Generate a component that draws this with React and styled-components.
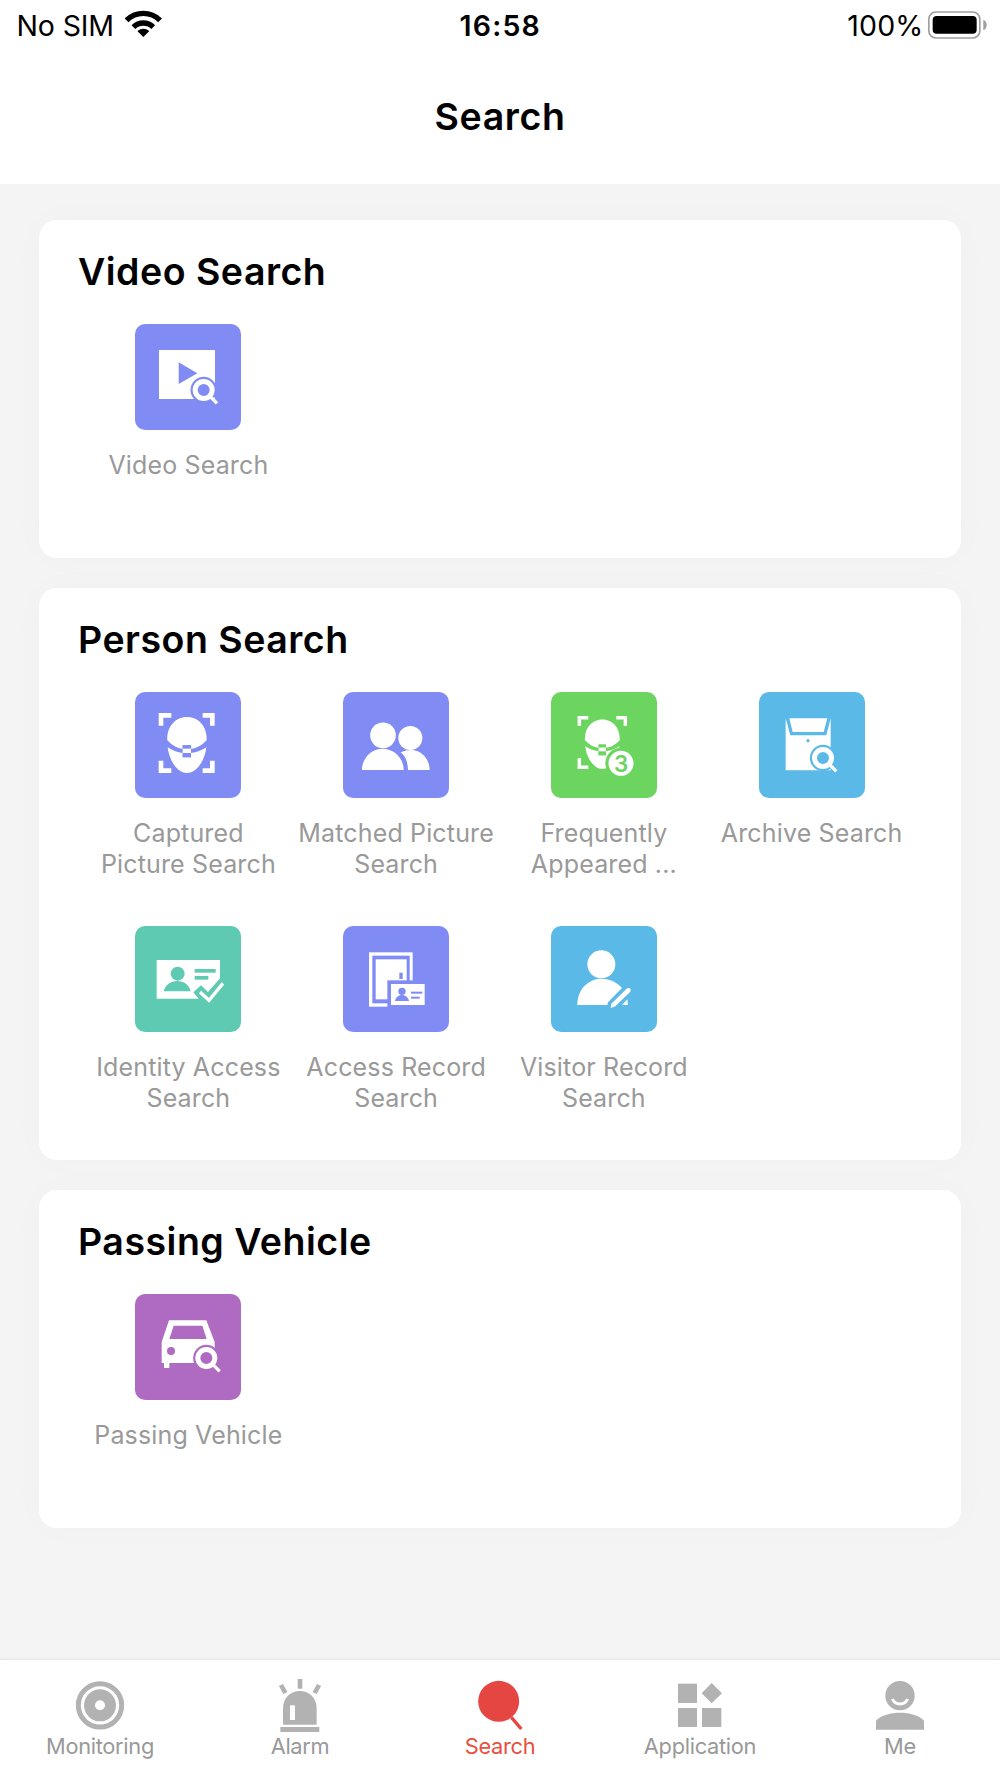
import React from "react";
import styled, { createGlobalStyle } from "styled-components";

const COLORS = {
  indigo: "#808bf4",
  green: "#6bd560",
  blue: "#5bb9e7",
  teal: "#5ecab2",
  purple: "#af6ac1",
};

const Magnifier = ({ cx, cy, bg }) => (
  <>
    <circle cx={cx} cy={cy} r="39.5" fill={bg} />
    <circle cx={cx} cy={cy} r="25.5" fill={bg} stroke="#fff" strokeWidth="15" />
    <path
      d={`M${cx + 20} ${cy + 20}L${cx + 40} ${cy + 40}`}
      stroke="#fff"
      strokeWidth="10"
    />
  </>
);

const Face = () => (
  <>
    <path d="M97 145C95 105 120 75 156 75C192 75 217 105 215 145Q193 168 169 171L168 160H143V171Q118 168 97 145Z" />
    <path d="M98 166Q118 180 143 183V196H168V183Q194 180 214 166C210 205 185 243 156 243C127 243 102 205 98 166Z" />
    <path d="M143 160H168V170H143ZM143 183H168V196H143Z" fill="var(--tile)" />
    <rect x="143" y="170" width="25" height="13" />
  </>
);

const VideoIcon = ({ bg }) => (
  <>
    <rect x="72" y="78" width="168" height="147" />
    <path d="M131 115L187 148L131 180Z" fill={bg} />
    <Magnifier cx={206} cy={198} bg={bg} />
  </>
);

const CapturedIcon = () => (
  <>
    <path
      d="M78 101V70H109M203 70H232V101M232 206V236H203M109 236H78V206"
      fill="none"
      stroke="#fff"
      strokeWidth="14"
    />
    <Face />
  </>
);

const MatchedIcon = () => (
  <>
    <circle cx="120" cy="130" r="38.5" />
    <path d="M57 234C57 195 88 170 119 170C153 170 182 198 182 234Z" />
    <circle cx="202" cy="138" r="36" />
    <path d="M173 181Q188 174 204 174C236 174 260 202 260 234H195C194 210 188 192 173 181Z" />
  </>
);

const FrequentIcon = ({ bg }) => (
  <>
    <path
      d="M85 102V77H112M196 77H223V102M112 226H85V199"
      fill="none"
      stroke="#fff"
      strokeWidth="10.5"
    />
    <g transform="translate(16.4 16.4) scale(0.883)">
      <Face />
    </g>
    <circle cx="210" cy="214" r="47" fill={bg} />
    <circle cx="210" cy="214" r="37.5" />
    <BadgeText x="210" y="239" fill={bg}>
      3
    </BadgeText>
  </>
);

const ArchiveIcon = ({ bg }) => (
  <>
    <path d="M80 79L94 130H202L215 79V235H80Z" />
    <path d="M91 79H205L194 120H101Z" />
    <circle cx="147" cy="146" r="5" fill={bg} />
    <Magnifier cx={192} cy={198} bg={bg} />
  </>
);

const IdentityIcon = ({ bg }) => (
  <>
    <path d="M65 102H255V157L219 198L198 178L175 199L191 218H65Z" />
    <g fill={bg}>
      <circle cx="128" cy="143" r="21" />
      <path d="M86 196C90 176 108 165 127 165C146 165 163 176 167 196Z" />
      <rect x="179" y="129" width="63" height="11" />
      <rect x="179" y="150" width="41" height="11" />
    </g>
    <path
      d="M195 198L222 223L264 172"
      fill="none"
      stroke="#fff"
      strokeWidth="10"
    />
  </>
);

const AccessIcon = ({ bg }) => (
  <>
    <rect x="78" y="79" width="131" height="163" />
    <rect x="88" y="89" width="112" height="143" fill={bg} />
    <rect x="98" y="100" width="93" height="120" />
    <rect x="169" y="140" width="10" height="19" fill={bg} />
    <rect x="133" y="163" width="112" height="82" fill={bg} />
    <rect x="144" y="174" width="101" height="63" />
    <g fill={bg}>
      <circle cx="177" cy="196" r="11" />
      <path d="M156 225C158 214 167 207 177 207C187 207 196 214 198 225Z" />
      <rect x="204" y="197" width="34" height="6" />
      <rect x="204" y="212" width="26" height="6" />
    </g>
  </>
);

const VisitorIcon = () => (
  <>
    <circle cx="151" cy="115" r="42" />
    <path d="M79 237C79 190 112 158 151 158C178 158 198 169 213 186L171 229L169 237Z" />
    <path d="M229 220L231 237H213Z" />
    <path d="M179 246L181 233L226 189Q231 184 237 187Q241 191 238 197L193 241Z" />
  </>
);

const CarIcon = ({ bg }) => (
  <>
    <path d="M102 79H214L239 144V207H103V222H87V207H80V144Z" />
    <path d="M116 95H202L215 135H103Z" fill={bg} />
    <circle cx="108" cy="171" r="12" fill={bg} />
    <Magnifier cx={214} cy={192} bg={bg} />
  </>
);

const sections = [
  {
    title: "Video Search",
    items: [{ label: "Video Search", color: COLORS.indigo, icon: VideoIcon }],
  },
  {
    title: "Person Search",
    items: [
      {
        label: "Captured Picture Search",
        color: COLORS.indigo,
        icon: CapturedIcon,
      },
      {
        label: "Matched Picture Search",
        color: COLORS.indigo,
        icon: MatchedIcon,
      },
      {
        label: "Frequently Appeared ...",
        color: COLORS.green,
        icon: FrequentIcon,
      },
      { label: "Archive Search", color: COLORS.blue, icon: ArchiveIcon },
      {
        label: "Identity Access Search",
        color: COLORS.teal,
        icon: IdentityIcon,
      },
      {
        label: "Access Record Search",
        color: COLORS.indigo,
        icon: AccessIcon,
      },
      {
        label: "Visitor Record Search",
        color: COLORS.blue,
        icon: VisitorIcon,
      },
    ],
  },
  {
    title: "Passing Vehicle",
    items: [{ label: "Passing Vehicle", color: COLORS.purple, icon: CarIcon }],
  },
];

const tabs = [
  {
    label: "Monitoring",
    icon: (
      <>
        <circle
          cx="90"
          cy="88"
          r="65"
          fill="none"
          stroke="currentColor"
          strokeWidth="15"
        />
        <circle cx="90" cy="88" r="48" />
        <circle cx="90" cy="88" r="15" fill="#fff" />
      </>
    ),
  },
  {
    label: "Alarm",
    icon: (
      <>
        <path d="M39 146V96C39 66 61 45 89.5 45C118 45 140 66 140 96V146Z" />
        <rect x="60" y="88" width="15" height="44" fill="#fff" />
        <rect x="31" y="153" width="117" height="15" />
        <path
          d="M90 9V38M33 27L46 51M147 27L134 51"
          stroke="currentColor"
          strokeWidth="14"
        />
      </>
    ),
  },
  {
    label: "Search",
    active: true,
    icon: (
      <>
        <circle cx="86" cy="76" r="61.5" />
        <path d="M124 124L154 159" stroke="currentColor" strokeWidth="10" />
      </>
    ),
  },
  {
    label: "Application",
    icon: (
      <>
        <rect x="24" y="23" width="57" height="58" />
        <rect x="24" y="96" width="57" height="57" />
        <rect x="96" y="96" width="58" height="57" />
        <path d="M125 21L156 52L125 82L95 52Z" />
      </>
    ),
  },
  {
    label: "Me",
    icon: (
      <>
        <circle cx="90" cy="59" r="44" />
        <path
          d="M67 69C76 89 104 89 113 69"
          fill="none"
          stroke="#fff"
          strokeWidth="9"
        />
        <path d="M18 161V134C34 117 62 110 90 110C118 110 146 117 162 134V161Z" />
      </>
    ),
  },
];

const App = () => (
  <>
    <GlobalStyle />
    <Screen>
      <Header>
        <StatusBar>
          <Carrier>
            No SIM
            <svg width="36.7" height="27" viewBox="0 0 110 81">
              <path d="M55 81L37 63Q55 49 73 63Z" />
              <path
                d="M25.3 51.3A42 42 0 0 1 84.7 51.3M4.8 30.8A71 71 0 0 1 105.2 30.8"
                fill="none"
                stroke="#000"
                strokeWidth="16"
              />
            </svg>
          </Carrier>
          <Clock>16:58</Clock>
          <Battery>
            100%
            <svg width="59" height="28" viewBox="0 0 177 84">
              <rect
                x="2.5"
                y="3"
                width="153"
                height="78"
                rx="21"
                fill="none"
                stroke="#9f9f9f"
                strokeWidth="5"
              />
              <rect x="14" y="15" width="132" height="53" rx="12" />
              <path d="M166 26Q176 30 176 42Q176 54 166 58Z" fill="#9f9f9f" />
            </svg>
          </Battery>
        </StatusBar>
        <PageTitle>Search</PageTitle>
      </Header>

      <Content>
        {sections.map((section) => (
          <Card key={section.title}>
            <CardTitle>{section.title}</CardTitle>
            <Grid>
              {section.items.map(({ label, color, icon: Icon }) => (
                <Item key={label}>
                  <Tile $color={color} viewBox="0 0 318 318">
                    <Icon bg={color} />
                  </Tile>
                  <Label>{label}</Label>
                </Item>
              ))}
            </Grid>
          </Card>
        ))}
      </Content>

      <TabBar>
        {tabs.map((tab) => (
          <Tab key={tab.label} $active={tab.active}>
            <svg
              width="60"
              height="56"
              viewBox="0 0 180 168"
              fill="currentColor"
            >
              {tab.icon}
            </svg>
            <TabLabel $active={tab.active}>{tab.label}</TabLabel>
          </Tab>
        ))}
      </TabBar>
    </Screen>
  </>
);

export default App;

const GlobalStyle = createGlobalStyle`
  body {
    margin: 0;
  }
  * {
    box-sizing: border-box;
  }
`;

const Screen = styled.div`
  width: 1000px;
  height: 1778px;
  display: flex;
  flex-direction: column;
  overflow: hidden;
  background: #f4f4f4;
  color: #000;
  font-family: Inter, "Liberation Sans", sans-serif;
`;

const Header = styled.header`
  height: 184px;
  flex-shrink: 0;
  background: #fff;
`;

const StatusBar = styled.div`
  display: grid;
  grid-template-columns: 1fr auto 1fr;
  padding: 0 13px 0 16.5px;
  font-size: 28.5px;
  line-height: 51px;
`;

const Carrier = styled.div`
  display: flex;
  align-items: center;
  gap: 11px;
  letter-spacing: -0.15px;

  svg {
    margin-bottom: 4px;
  }
`;

const Clock = styled.div`
  margin-right: 3px;
  font-weight: 600;
  letter-spacing: 1.2px;
`;

const Battery = styled.div`
  display: flex;
  justify-content: flex-end;
  align-items: center;
  gap: 4.5px;
  letter-spacing: 0.2px;

  svg {
    margin-bottom: 2px;
  }
`;

const PageTitle = styled.h1`
  margin: 0;
  font-size: 37.5px;
  font-weight: 560;
  line-height: 131px;
  text-align: center;
  letter-spacing: 0.6px;
`;

const Content = styled.main`
  flex: 1;
  display: flex;
  flex-direction: column;
  gap: 30px;
  padding: 36px 39px 0;
`;

const Card = styled.section`
  padding: 0 45.5px;
  border-radius: 18px;
  background: #fff;
  box-shadow: 0 0 40px rgba(0, 0, 0, 0.018);
`;

const CardTitle = styled.h2`
  height: 104px;
  margin: 0 0 0 -6.5px;
  font-size: 37.5px;
  font-weight: 560;
  line-height: 103px;
  letter-spacing: 0.5px;
`;

const Grid = styled.div`
  display: grid;
  grid-template-columns: repeat(4, 1fr);
  grid-auto-rows: 234px;
`;

const Item = styled.div`
  display: flex;
  flex-direction: column;
  align-items: center;
`;

const Tile = styled.svg`
  --tile: ${(props) => props.$color};
  width: 106px;
  height: 106px;
  flex-shrink: 0;
  border-radius: 10px;
  background: var(--tile);
  fill: #fff;
`;

const BadgeText = styled.text`
  font-size: 67px;
  font-weight: 600;
  text-anchor: middle;
`;

const Label = styled.div`
  width: 207px;
  margin-top: 19.6px;
  padding: 0 4px;
  color: #999;
  font-size: 25px;
  line-height: 31.4px;
  text-align: center;
  letter-spacing: 0.15px;
`;

const TabBar = styled.nav`
  height: 118px;
  flex-shrink: 0;
  display: grid;
  grid-template-columns: repeat(5, 1fr);
  padding-top: 16px;
  background: #fff;
  box-shadow: 0 0 4px rgba(0, 0, 0, 0.12);
`;

const Tab = styled.div`
  display: flex;
  flex-direction: column;
  align-items: center;
  color: ${(props) => (props.$active ? "#e64642" : "#b2b2b2")};
`;

const TabLabel = styled.span`
  margin-top: 1px;
  color: ${(props) => (props.$active ? "#e84f40" : "#999")};
  font-size: 21.8px;
  line-height: 26px;
  letter-spacing: -0.3px;
`;
